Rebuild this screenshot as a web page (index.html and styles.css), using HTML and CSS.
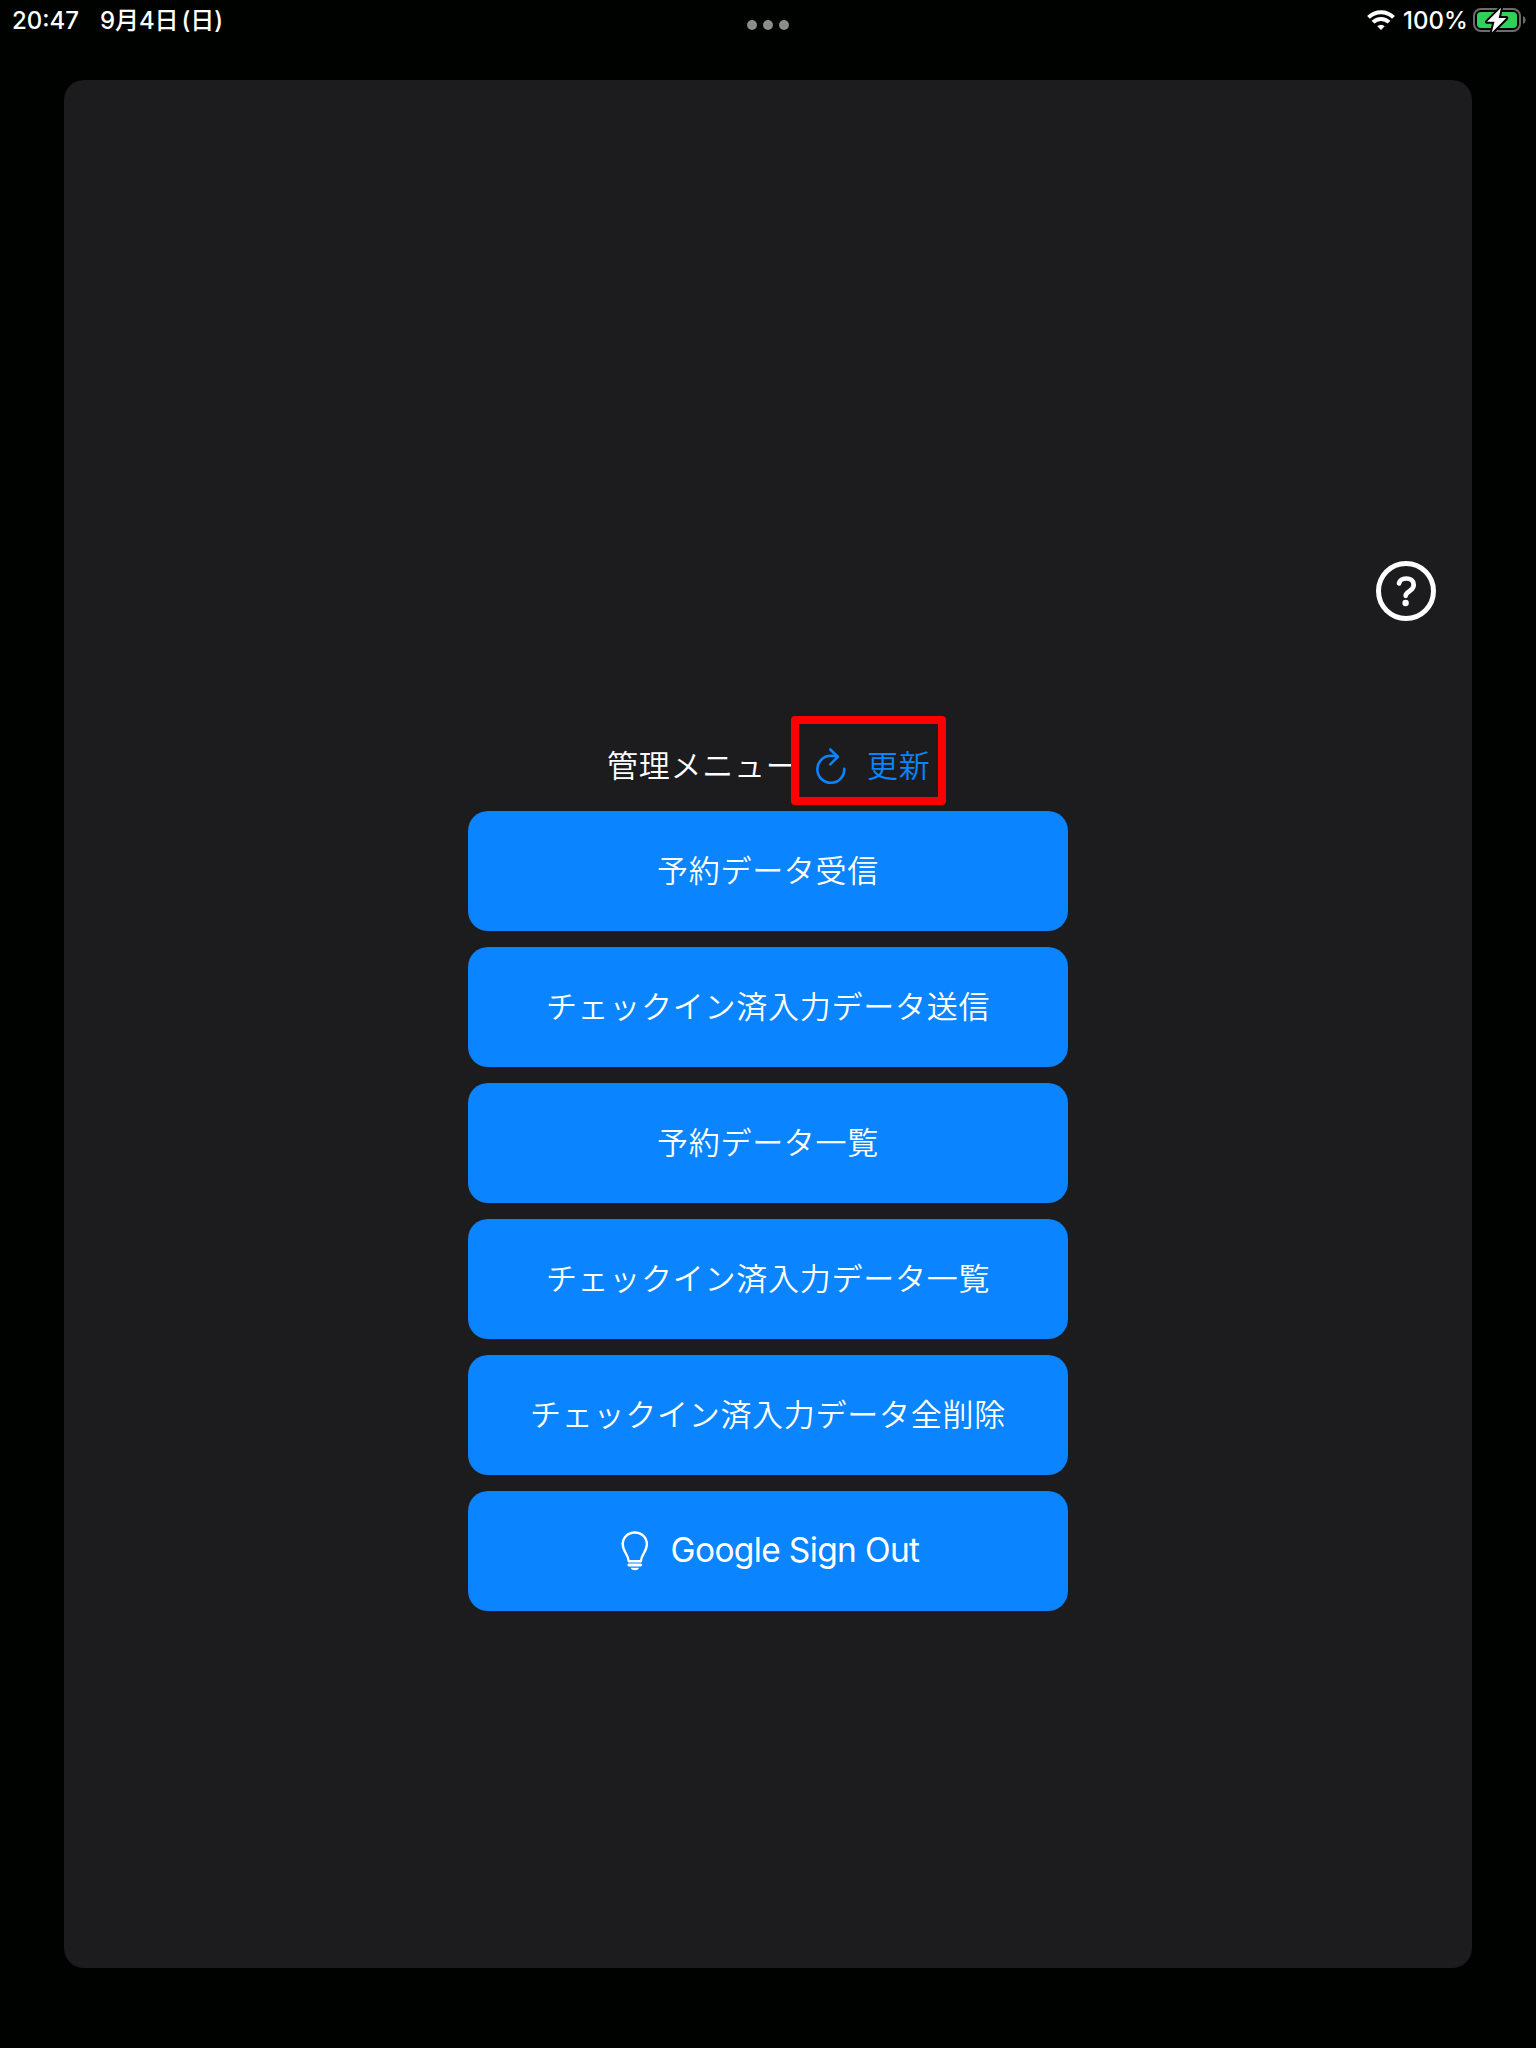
FILE: index.html
```html
<!DOCTYPE html>
<html lang="ja">
<head>
<meta charset="utf-8">
<title>管理メニュー</title>
<link rel="stylesheet" href="styles.css">
</head>
<body>
<header class="status">
  <div class="status-left"><span class="clock">20:47</span><span class="date">9月4日<span class="paren">(</span>日<span>)</span></span></div>
  <div class="dots"><i></i><i></i><i></i></div>
  <div class="status-right">
    <svg class="wifi" width="28" height="20" viewBox="0 0 28 20" fill="none" stroke="#fff" stroke-width="4">
      <path d="M1.500 7.400a17.800 17.800 0 0 1 25 0"/>
      <path d="M6 12.200a11.400 11.400 0 0 1 16 0"/>
      <path d="M14 19.900l-3.700-3.700a5.200 5.200 0 0 1 7.400 0z" fill="#fff" stroke="none"/>
    </svg>
    <span class="percent">100%</span>
    <svg class="battery" width="54" height="28" viewBox="0 0 54 28">
      <rect x="1" y="3" width="46" height="22" rx="7" fill="none" stroke="#6c6c6c" stroke-width="2"/>
      <rect x="4" y="6" width="40" height="16" rx="4" fill="#30d158"/>
      <path d="M50 10c3.4 1.200 3.400 6.800 0 8z" fill="#6c6c6c"/>
      <path d="M28 1.800L14 15.800h7.500l-2.700 10.700L33.300 12h-7.600z" fill="#fff" stroke="#000" stroke-width="4" stroke-linejoin="round" paint-order="stroke"/>
    </svg>
  </div>
</header>
<main class="sheet">
  <button class="help" aria-label="ヘルプ">
    <svg width="60" height="60" viewBox="0 0 60 60" fill="none" stroke="#fff">
      <circle cx="30" cy="30" r="27.500" stroke-width="5"/>
      <path d="M23 22.400C23.800 19 26.400 17.500 30.200 17.500c4.400 0 7.500 2.400 7.500 6.200 0 3-1.500 4.700-4.300 6.500-2.500 1.600-3.700 2.700-3.700 4.600" stroke-width="4.700" stroke-linecap="round"/>
      <circle cx="29.600" cy="42" r="3.200" fill="#fff" stroke="none"/>
    </svg>
  </button>
  <section class="menu">
    <div class="heading">
      <h1 class="title">管理メニュー</h1>
      <div class="refresh">
        <svg width="30" height="37" viewBox="0 0 30 37" fill="none" stroke="#0a84ff" stroke-width="2.600" stroke-linecap="round" stroke-linejoin="round">
          <path d="M28.300 20.800A13.500 13.500 0 1 1 14.800 7.800c2.400 0 4.600.4 6.600 1"/>
          <path d="M14.300 1.500l7.500 7.300-7.500 7.500"/>
        </svg>
        <span>更新</span>
      </div>
    </div>
    <button class="action">予約データ受信</button>
    <button class="action">チェックイン済入力データ送信</button>
    <button class="action">予約データ一覧</button>
    <button class="action">チェックイン済入力データ一覧</button>
    <button class="action">チェックイン済入力データ全削除</button>
    <button class="action signout">
      <svg width="28" height="40" viewBox="0 0 28 40" fill="none" stroke="#fff" stroke-width="2.400" stroke-linejoin="round">
        <path d="M7.700 30.200C7.500 23.600 1.700 20.500 1.700 13.300 1.700 6.300 7 1.500 13.800 1.500s12.100 4.800 12.100 11.800c0 7.200-5.800 10.300-6 16.900z"/>
        <path d="M7.800 34h12" stroke-width="2.800" stroke-linecap="round"/>
        <path d="M9.500 36.800h8.600c-.7 1.700-2.200 2.500-4.300 2.500s-3.600-.8-4.300-2.500z" fill="#fff" stroke="none"/>
      </svg>
      <span class="label">Google Sign Out</span>
    </button>
  </section>
</main>
</body>
</html>
```

FILE: styles.css
```css
* { box-sizing: border-box; }
body {
  margin: 0;
  width: 1536px;
  height: 2048px;
  background: #000200;
  color: #fff;
  font-family: Inter, "Noto Sans CJK JP", sans-serif;
  overflow: hidden;
}
button { border: 0; padding: 0; background: none; color: inherit; font: inherit; }
svg { display: block; flex: none; }
.status {
  display: grid;
  grid-template-columns: 1fr auto 1fr;
  height: 80px;
  padding: 0 9px;
  font-size: 24px;
  font-weight: 500;
  line-height: 41px;
  white-space: nowrap;
}
.status-left { display: flex; padding-left: 3px; }
.clock { width: 88px; }
.date { letter-spacing: -.1px; }
.paren { margin-left: 3px; }
.dots { display: flex; gap: 6px; padding-top: 20px; }
.dots i { width: 10px; height: 10px; border-radius: 50%; background: #8b8d8b; }
.status-right { display: flex; justify-content: flex-end; }
.wifi { margin: 10px 8px 0 0; }
.percent { width: 70px; }
.battery { margin-top: 6px; }
.sheet {
  width: 1408px;
  height: 1888px;
  margin: 0 auto;
  padding: 481px 36px 0;
  border-radius: 20px;
  background: #1c1c1e;
}
.help { display: block; width: 60px; height: 60px; margin-left: auto; }
.menu {
  display: flex;
  flex-direction: column;
  gap: 16px;
  width: 600px;
  margin: 95px auto 0;
  font-family: "Noto Sans CJK JP DemiLight", "Noto Sans CJK JP", sans-serif;
  font-size: 31px;
  font-weight: 350;
  letter-spacing: .73px;
}
.heading { display: flex; height: 79px; padding-left: 139px; }
.title { width: 184px; height: 79px; margin: 0; font: inherit; line-height: 95px; white-space: nowrap; }
.refresh {
  display: flex;
  width: 155px;
  height: 89px;
  padding-left: 17px;
  border: 8px solid #f00;
  border-radius: 4px;
  background: #1c1c1e;
  color: #0a84ff;
  line-height: 79px;
  white-space: nowrap;
}
.refresh svg { margin: 24px 21px 0 0; }
.action {
  display: flex;
  align-items: center;
  justify-content: center;
  height: 120px;
  padding-bottom: 5px;
  border-radius: 20px;
  background: #0a84ff;
  letter-spacing: .73px;
}
.signout {
  gap: 22px;
  padding: 0 0 0 4px;
  font-family: Inter, sans-serif;
  font-size: 33.5px;
  font-weight: 400;
  letter-spacing: -.65px;
}
.label { padding-bottom: 2px; }
```
